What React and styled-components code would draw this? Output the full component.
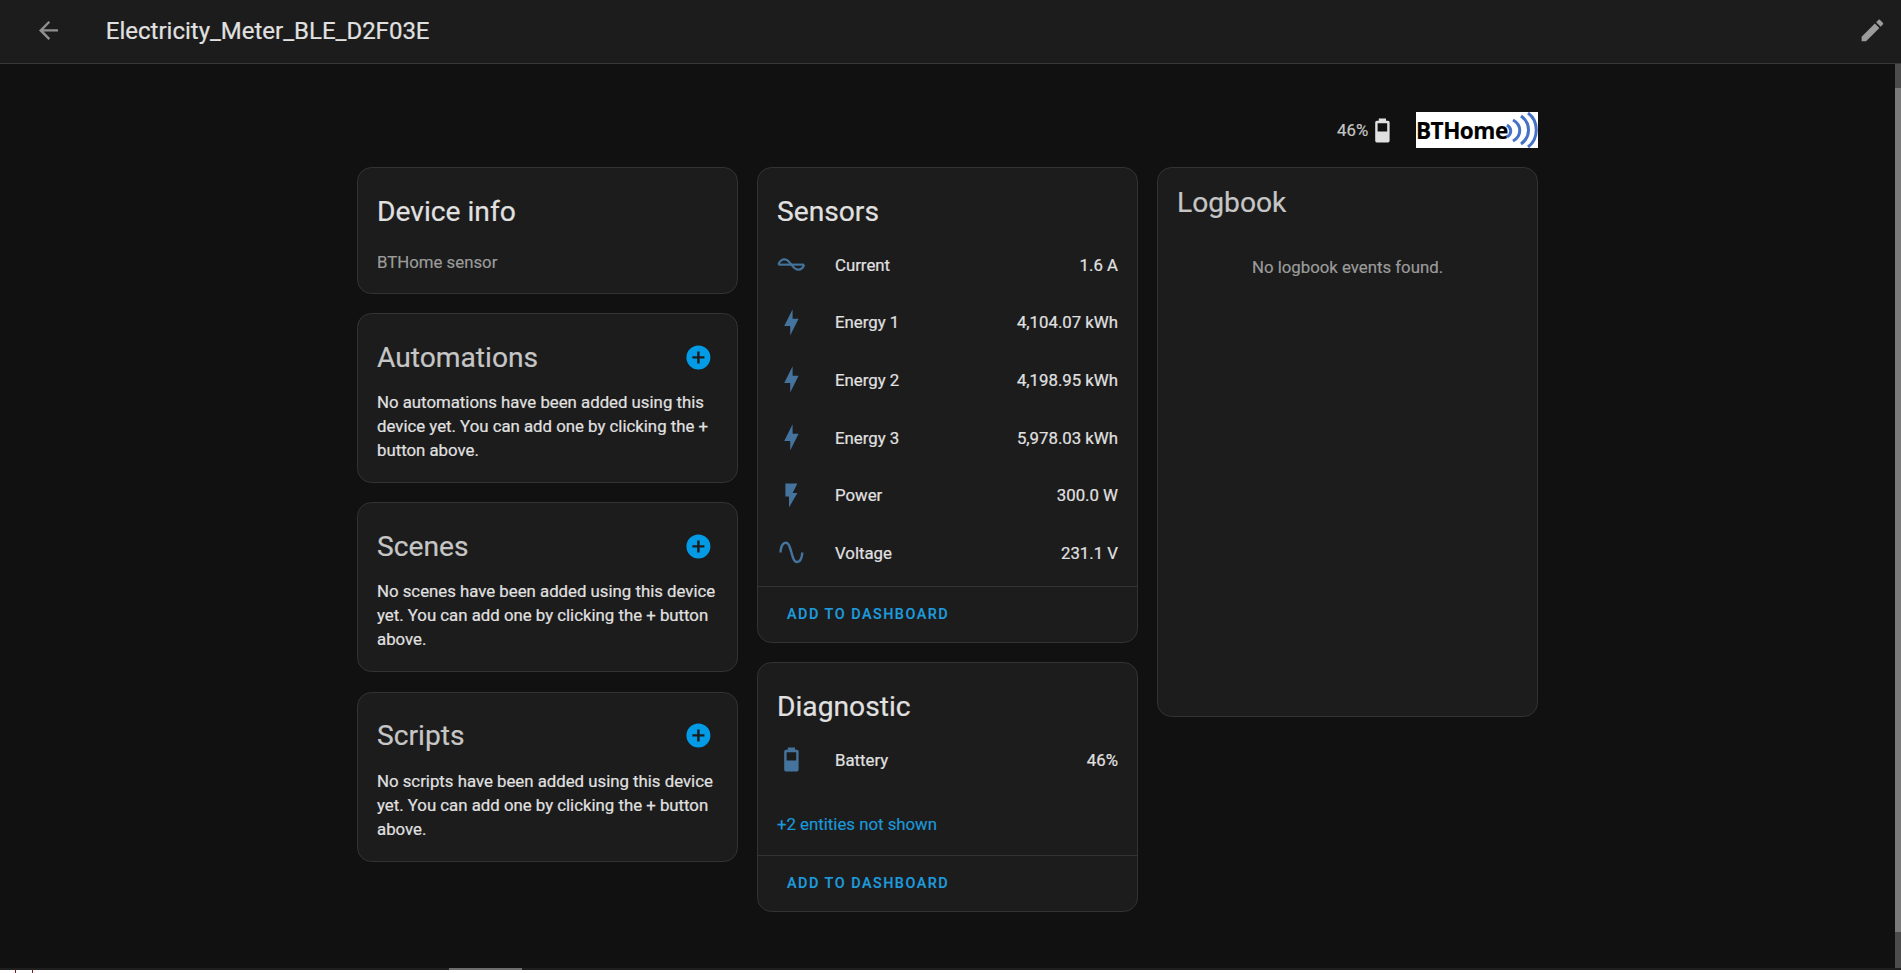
import React from "react";
import styled, { createGlobalStyle } from "styled-components";

const Global = createGlobalStyle`
  html, body { margin: 0; padding: 0; height: 100%; overflow: hidden; background: #111111; }
  * { box-sizing: border-box; }
  body { font-family: Roboto, "Liberation Sans", sans-serif; color: #e1e1e1; -webkit-text-stroke: 0.2px; }
`;

const Page = styled.div`
  width: 1901px; height: 973px; display: flex; flex-direction: column; background: #111111;
`;
const TopBar = styled.header`
  flex: none; height: 64px; display: flex; align-items: center;
  padding: 0 14px 2px 34px; background: #1c1c1c; border-bottom: 1px solid #383838;
`;
const Title = styled.h1`
  margin: 0 0 0 43px; flex: 1; font-size: 24px; font-weight: 400; color: #e1e1e1; white-space: nowrap;
`;
const Middle = styled.div`
  flex: 1; min-height: 0; display: flex;
`;
const Content = styled.main`
  flex: 1; min-width: 0; padding: 48px 0 0 357px;
`;
const Inner = styled.div`
  width: 1181px;
`;
const StatusRow = styled.div`
  display: flex; align-items: center; justify-content: flex-end; height: 36px; margin-bottom: 19px;
`;
const StatusText = styled.span`
  font-size: 16.8px; color: #c4c4c4;
`;
const StatusIcon = styled.span`
  display: flex; margin: 0 19px 0 0;
`;
const Logo = styled.div`
  width: 122px; height: 36px; background: #fff; display: flex; align-items: center; overflow: hidden;
`;
const LogoText = styled.span`
  font-family: "Open Sans", sans-serif; font-weight: 700; font-size: 22.5px; letter-spacing: -0.5px; color: #000;
  white-space: nowrap; width: 90px; flex: none;
`;
const Columns = styled.div`
  display: grid; grid-template-columns: repeat(3, 381px); column-gap: 19px; align-items: start;
`;
const Column = styled.div`
  display: flex; flex-direction: column; gap: 19.2px;
`;
const Card = styled.section`
  background: #1c1c1c; border: 1px solid #333333; border-radius: 14.4px;
  height: ${p => p.$h}px; display: flex; flex-direction: column; overflow: hidden;
`;
const CardHead = styled.div`
  flex: none; display: flex; align-items: center; justify-content: space-between;
  height: ${p => p.$height ?? 56}px; margin-top: ${p => p.$mt ?? 15}px; padding: 0 24px 0 19px;
`;
const CardTitle = styled.h2`
  margin: 0; font-size: 28.2px; font-weight: 400; color: ${p => p.$dim ? "#c6c6c6" : "#e1e1e1"};
`;
const AddIcon = styled.span`
  display: flex; margin-top: 0.5px;
`;
const Sub = styled.div`
  padding: 11px 19px 0; font-size: 16.8px; line-height: 24px; color: #9b9b9b;
`;
const Desc = styled.div`
  padding: 5px 19px 0; font-size: 16.8px; line-height: 24px; color: #e1e1e1;
`;
const Rows = styled.div`
  flex: 1; min-height: 0; padding: 0 19px;
`;
const Row = styled.div`
  display: flex; align-items: center; height: 57.6px; font-size: 16.8px; color: #e1e1e1;
`;
const RowIcon = styled.span`
  flex: none; width: 29px; height: 29px; margin-right: 29px; display: flex;
`;
const RowLabel = styled.span`
  flex: 1;
`;
const MoreLink = styled.div`
  padding: 0 19px 19px; font-size: 16.8px; line-height: 24px; color: #1b97d6;
`;
const Actions = styled.div`
  flex: none; height: 56px; display: flex; align-items: center; padding: 0 29px;
  border-top: 1px solid #333333;
`;
const ActionText = styled.span`
  font-size: 14.4px; font-weight: 500; letter-spacing: 1.5px; color: #1e9bdc;
`;
const Empty = styled.div`
  padding-top: 25px; text-align: center; font-size: 16.8px; line-height: 24px; color: #9b9b9b;
`;
const Rail = styled.div`
  flex: none; width: 6px; background: #4c4c4c; padding-top: 24px;
`;
const RailThumb = styled.div`
  height: 844px; background: #7a7a7a;
`;
const HScroll = styled.div`
  flex: none; height: 2px; background: #1f1f1f; padding-left: 449px;
`;
const HThumb = styled.div`
  width: 73px; height: 2px; background: #6e6e6e;
`;
const Strip = styled.div`
  flex: none; height: 3px; background: #ffffff; display: flex; padding-left: 15px; gap: 16px;
`;
const Tick = styled.span`
  width: 1px; height: 3px; background: #7a1f1f;
`;

const Ico = ({ d, size = 28.8, color = "#44739e" }) => (
  <svg width={size} height={size} viewBox="0 0 24 24" fill={color} style={{ flex: "none" }}><path d={d} /></svg>
);

const P = {
  back: "M20,11V13H8L13.5,18.5L12.08,19.92L4.16,12L12.08,4.08L13.5,5.5L8,11H20Z",
  pencil: "M20.71,7.04C21.1,6.65 21.1,6 20.71,5.63L18.37,3.29C18,2.9 17.35,2.9 16.96,3.29L15.12,5.12L18.87,8.87M3,17.25V21H6.75L17.81,9.93L14.06,6.18L3,17.25Z",
  plus: "M17,13H13V17H11V13H7V11H11V7H13V11H17M12,2A10,10 0 0,0 2,12A10,10 0 0,0 12,22A10,10 0 0,0 22,12A10,10 0 0,0 12,2Z",
  bolt: "M11 15H6L13 1V9H18L11 23V15Z",
  flash: "M7,2V13H10V22L17,10H13L17,2H7Z",
  sine: "M16.5,21C13.5,21 12.31,16.76 11.05,12.28C10.14,9.04 9,5 7.5,5C4.11,5 4,11.93 4,12H2C2,11.63 2.06,3 7.5,3C10.5,3 11.71,7.25 12.97,11.74C13.83,14.8 15,19 16.5,19C19.94,19 20.03,12.07 20.03,12H22.03C22.03,12.37 21.97,21 16.5,21Z",
  battery: "M16,13H8V6H16M16.67,4H15V2H9V4H7.33A1.33,1.33 0 0,0 6,5.33V20.67C6,21.4 6.6,22 7.33,22H16.67A1.33,1.33 0 0,0 18,20.67V5.33C18,4.6 17.4,4 16.67,4Z",
};

const CurrentIcon = () => (
  <svg width="28.8" height="28.8" viewBox="0 0 24 24" fill="none" stroke="#44739e" strokeWidth="1.8" style={{ flex: "none" }}>
    <path d="M1.2 12.2C2 9.2 4.4 7.6 6.6 7.8C9.4 8 10.4 10.6 12 12.2C13.6 14.4 15.2 16.4 17.6 16.4C20 16.4 21.8 14.8 22.6 12.2" />
    <path d="M1.2 12.2H22.6" />
  </svg>
);

const BlockCard = ({ title, text }) => (
  <Card $h={170}>
    <CardHead>
      <CardTitle $dim>{title}</CardTitle>
      <AddIcon><Ico d={P.plus} color="#039be5" /></AddIcon>
    </CardHead>
    <Desc>{text}</Desc>
  </Card>
);

const sensors = [
  ["Current", "1.6 A", <CurrentIcon key="c" />],
  ["Energy 1", "4,104.07 kWh", <Ico key="b1" d={P.bolt} />],
  ["Energy 2", "4,198.95 kWh", <Ico key="b2" d={P.bolt} />],
  ["Energy 3", "5,978.03 kWh", <Ico key="b3" d={P.bolt} />],
  ["Power", "300.0 W", <Ico key="f" d={P.flash} />],
  ["Voltage", "231.1 V", <Ico key="s" d={P.sine} />],
];

export default function App() {
  return (
    <Page>
      <Global />
      <TopBar>
        <Ico d={P.back} color="#8f8f8f" />
        <Title>Electricity_Meter_BLE_D2F03E</Title>
        <Ico d={P.pencil} color="#9b9b9b" />
      </TopBar>
      <Middle>
        <Content>
          <Inner>
            <StatusRow>
              <StatusText>46%</StatusText>
              <StatusIcon><Ico d={P.battery} color="#e1e1e1" /></StatusIcon>
              <Logo>
                <LogoText>BTHome</LogoText>
                <svg width="32" height="36" viewBox="0 0 32 36" fill="none" stroke="#4472c4" strokeWidth="3" style={{ flex: "none" }}>
                  <path d="M1 13C6 16 6 22 1 25" />
                  <path d="M7 8C16 13 16 24 7 29" />
                  <path d="M15 4C25 11 25 25 15 32" />
                  <path d="M22 1C33 9 33 27 22 35" />
                </svg>
              </Logo>
            </StatusRow>
            <Columns>
              <Column>
                <Card $h={127}>
                  <CardHead><CardTitle>Device info</CardTitle></CardHead>
                  <Sub>BTHome sensor</Sub>
                </Card>
                <BlockCard title="Automations" text="No automations have been added using this device yet. You can add one by clicking the + button above." />
                <BlockCard title="Scenes" text="No scenes have been added using this device yet. You can add one by clicking the + button above." />
                <BlockCard title="Scripts" text="No scripts have been added using this device yet. You can add one by clicking the + button above." />
              </Column>
              <Column>
                <Card $h={476}>
                  <CardHead $mt={18} $height={50}><CardTitle>Sensors</CardTitle></CardHead>
                  <Rows>
                    {sensors.map(([l, v, i]) => (
                      <Row key={l}><RowIcon>{i}</RowIcon><RowLabel>{l}</RowLabel><span>{v}</span></Row>
                    ))}
                  </Rows>
                  <Actions><ActionText>ADD TO DASHBOARD</ActionText></Actions>
                </Card>
                <Card $h={250}>
                  <CardHead $mt={18} $height={50}><CardTitle>Diagnostic</CardTitle></CardHead>
                  <Rows>
                    <Row><RowIcon><Ico d={P.battery} /></RowIcon><RowLabel>Battery</RowLabel><span>46%</span></Row>
                  </Rows>
                  <MoreLink>+2 entities not shown</MoreLink>
                  <Actions><ActionText>ADD TO DASHBOARD</ActionText></Actions>
                </Card>
              </Column>
              <Column>
                <Card $h={550}>
                  <CardHead $mt={6}><CardTitle $dim>Logbook</CardTitle></CardHead>
                  <Empty>No logbook events found.</Empty>
                </Card>
              </Column>
            </Columns>
          </Inner>
        </Content>
        <Rail><RailThumb /></Rail>
      </Middle>
      <HScroll><HThumb /></HScroll>
      <Strip><Tick /><Tick /></Strip>
    </Page>
  );
}
